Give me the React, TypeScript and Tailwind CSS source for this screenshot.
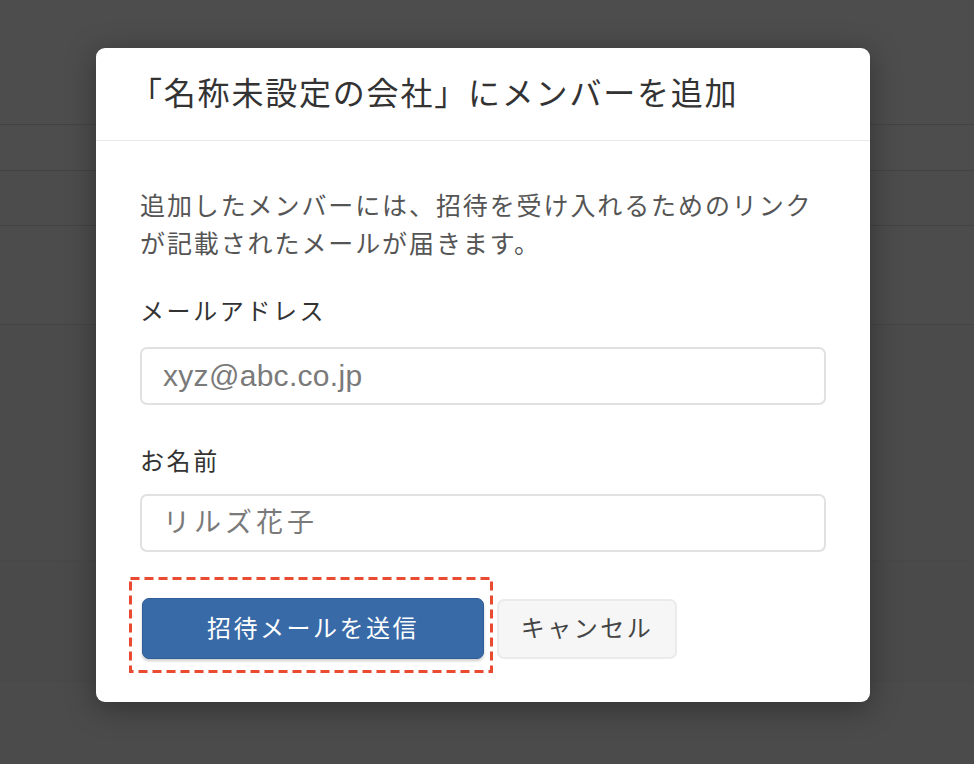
const font = "font-['Liberation_Sans','Noto_Sans_CJK_JP',sans-serif]";

const BackdropRows = () => (
  <div className="flex flex-col">
    <div className="h-[125px] border-b border-[#434343] bg-[#4d4d4d]" />
    <div className="h-[46px] border-b border-[#434343] bg-[#4d4d4d]" />
    <div className="h-[55px] border-b border-[#434343] bg-[#4c4c4c]" />
    <div className="h-[99px] border-b border-[#454545] bg-[#4c4c4c]" />
    <div className="h-[236px] border-b border-[#484848] bg-[#4b4b4b]" />
    <div className="h-[121px] border-b border-[#484848] bg-[#4a4a4a]" />
    <div className="h-[80px] bg-[#4b4b4b]" />
  </div>
);

const Field = ({
  label,
  placeholder,
  latin,
  tight,
}: {
  label: string;
  placeholder: string;
  latin?: boolean;
  tight?: boolean;
}) => (
  <div className="flex flex-col">
    <label className="text-[24px] leading-[38px] tracking-[2.6px] text-[#333]">{label}</label>
    <input
      type="text"
      placeholder={placeholder}
      className={`h-[58px] w-full rounded-[7px] border-2 border-[#e1e1e1] bg-white px-[21px] text-[#333] outline-none placeholder:text-[#7a7a7a] ${
        tight ? 'mt-[13px]' : 'mt-[16px]'
      } ${latin ? 'text-[30px] tracking-[0.3px]' : 'text-[27px] tracking-[4px]'}`}
    />
  </div>
);

export default function App() {
  return (
    <div className={`relative h-[764px] w-full overflow-hidden bg-[#4b4b4b] ${font}`}>
      <BackdropRows />

      {/* modal */}
      <div className="absolute left-[96px] top-[48px] w-[774px] rounded-[9px] bg-white shadow-[0_6px_30px_rgba(0,0,0,0.35)]">
        <div className="flex h-[93px] items-center border-b border-[#e8e8e8] px-[44px]">
          <h2 className="-ml-[10px] text-[32px] font-normal tracking-[1.8px] text-[#333]">
            「名称未設定の会社」にメンバーを追加
          </h2>
        </div>

        <div className="flex flex-col px-[44px] pb-[43px] pt-[46px]">
          <p className="text-[25px] leading-[38px] tracking-[1.9px] text-[#555]">
            追加したメンバーには、招待を受け入れるためのリンクが記載されたメールが届きます。
          </p>

          <div className="mt-[30px]">
            <Field label="メールアドレス" placeholder="xyz@abc.co.jp" latin />
          </div>
          <div className="mt-[38px]">
            <Field label="お名前" placeholder="リルズ花子" tight />
          </div>

          <div className="relative mt-[46px] flex items-center gap-[13px]">
            <button className="ml-[2px] h-[61px] w-[342px] rounded-[7px] border border-[#2f5d96] bg-[#386aa8] text-[24px] tracking-[2.5px] text-white shadow-[0_2px_3px_rgba(0,0,0,0.2)]">
              招待メールを送信
            </button>
            <button className="h-[60px] w-[180px] rounded-[7px] border-2 border-[#ebebeb] bg-[#f6f6f6] text-[24px] tracking-[2.5px] text-[#444]">
              キャンセル
            </button>
            {/* annotation */}
            <svg
              className="pointer-events-none absolute left-[-11px] top-[-21px]"
              width="364"
              height="96"
              viewBox="0 0 364 96"
            >
              <rect
                x="1.5"
                y="1.5"
                width="361"
                height="93"
                fill="none"
                stroke="#ea4a2f"
                strokeWidth="3"
                strokeDasharray="9 5"
              />
            </svg>
          </div>
        </div>
      </div>
    </div>
  );
}
